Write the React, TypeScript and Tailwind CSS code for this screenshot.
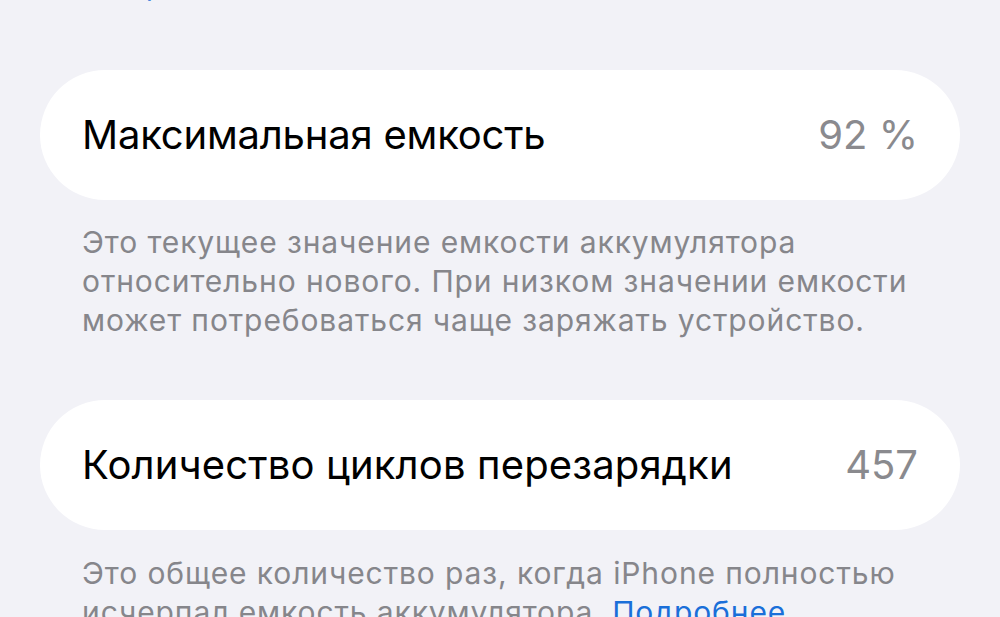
const FONT = "font-['Inter','Liberation_Sans',sans-serif]";

function Row({ title, value, track }: { title: string; value: string; track: string }) {
  return (
    <div className="mx-[40px] h-[130px] rounded-[65px] bg-white flex items-center justify-between pl-[42px] pr-[42px]">
      <span className={`text-[40px] leading-none text-black ${track}`}>{title}</span>
      <span className="text-[40px] leading-none text-[#8a8a8e]">{value}</span>
    </div>
  );
}

function Footer({ lines, className }: { lines: React.ReactNode[]; className?: string }) {
  return (
    <div className={`px-[82px] text-[30px] leading-[39px] tracking-[0.9px] text-[#86868b] ${className ?? ''}`}>
      {lines.map((l, i) => (
        <div key={i} className="whitespace-nowrap">{l}</div>
      ))}
    </div>
  );
}

export default function App() {
  return (
    <div className={`w-[1000px] h-[617px] overflow-hidden bg-[#f2f2f7] ${FONT}`}>
      {/* tail of the previous section's link */}
      <div className="h-[3px] overflow-hidden">
        <p className="mt-[-35px] pl-[84px] text-[30px] leading-[39px] tracking-[0.9px] text-[#1a6fd9]">Подробнее</p>
      </div>

      <div className="mt-[67px]">
        <Row title="Максимальная емкость" value="92 %" track="tracking-[-0.2px]" />
      </div>
      <Footer
        className="mt-[23px]"
        lines={[
          'Это текущее значение емкости аккумулятора',
          'относительно нового. При низком значении емкости',
          'может потребоваться чаще заряжать устройство.',
        ]}
      />

      <div className="mt-[60px]">
        <Row title="Количество циклов перезарядки" value="457" track="tracking-[0.15px]" />
      </div>
      <Footer
        className="mt-[24px]"
        lines={[
          'Это общее количество раз, когда iPhone полностью',
          <>исчерпал емкость аккумулятора. <span className="text-[#1a6fd9]">Подробнее</span></>,
        ]}
      />
    </div>
  );
}
